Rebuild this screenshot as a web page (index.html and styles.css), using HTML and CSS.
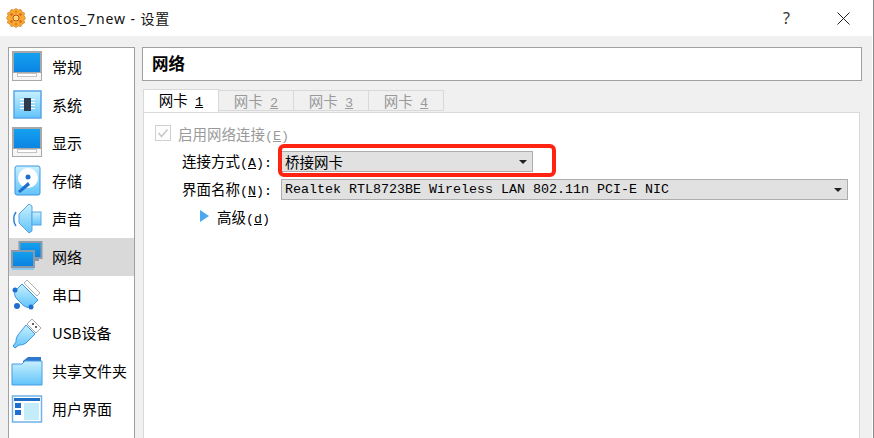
FILE: index.html
```html
<!DOCTYPE html>
<html lang="zh">
  <head>
    <meta charset="UTF-8" />
    <title>centos_7new - 设置</title>
    <link rel="stylesheet" href="styles.css">
  </head>
  <body>
    <svg class="defs" width="0" height="0">
      <defs>
        <linearGradient id="screen" x1="0" y1="0" x2="0" y2="1">
          <stop offset="0" stop-color="#14a2f0" />
          <stop offset="1" stop-color="#0a7fe0" />
        </linearGradient>
        <linearGradient id="light" x1="0" y1="0" x2="0" y2="1">
          <stop offset="0" stop-color="#c8f0ff" />
          <stop offset="1" stop-color="#62c4fa" />
        </linearGradient>
      </defs>
    </svg>
    <div class="window">
      <div class="titlebar">
        <svg class="app-icon" viewBox="0 0 20 20">
          <path d="M10 .5l2.300 1.500 2.700-.5 1 2.500 2.500 1-.5 2.700L19.500 10 18 12.300l.5 2.700-2.500 1-1 2.500-2.700-.5L10 19.500 7.700 18l-2.700.5-1-2.500-2.500-1 .5-2.700L.5 10 2 7.700 1.500 5l2.500-1 1-2.500 2.700.5z" fill="#f7a92c" stroke="#d08a3a" stroke-width=".8" />
          <circle cx="10" cy="10" r="3" fill="#fdd77a" stroke="#c0541a" stroke-width="1" />
          <circle cx="5.500" cy="6.500" r="1.300" fill="#d9622b" />
          <circle cx="14.500" cy="6.500" r="1.300" fill="#d9622b" />
          <circle cx="5.500" cy="13.500" r="1.300" fill="#d9622b" />
          <circle cx="14.500" cy="13.500" r="1.300" fill="#d9622b" />
          <circle cx="10" cy="3.800" r="1.100" fill="#e57a2e" />
          <circle cx="10" cy="16.200" r="1.100" fill="#e57a2e" />
        </svg>
        <span class="title">centos_7new - 设置</span>
        <span class="help">?</span>
        <svg class="close" viewBox="0 0 13 13">
          <path d="M.5.500l12 12M12.500.500l-12 12" stroke="#222" fill="none" />
        </svg>
      </div>

      <div class="content">
        <ul class="sidebar">
          <li>
            <svg class="icon" viewBox="0 0 32 32">
              <rect x="2" y="1" width="28" height="24" fill="url(#screen)" stroke="#a8a8a8" stroke-width="2" />
              <rect x="1.500" y="21.500" width="29" height="8" fill="#f6f6f6" stroke="#a8a8a8" />
              <rect x="6.500" y="22.500" width="19" height="3" fill="#fff" stroke="#c4c4c4" />
            </svg>
            常规
          </li>
          <li>
            <svg class="icon" viewBox="0 0 32 32">
              <rect x="3" y="2" width="27" height="27" fill="url(#light)" stroke="#5aa5e6" stroke-width="1.500" />
              <path d="M9 10.500h15M9 13.500h15M9 16.500h15M9 19.500h15" stroke="#fff" />
              <rect x="13" y="9" width="7" height="13" fill="#2e3b4e" />
            </svg>
            系统
          </li>
          <li>
            <svg class="icon" viewBox="0 0 32 32">
              <rect x="2" y="1" width="28" height="24" fill="url(#screen)" stroke="#a8a8a8" stroke-width="2" />
              <rect x="1.500" y="21.500" width="29" height="8" fill="#f6f6f6" stroke="#a8a8a8" />
              <rect x="6.500" y="22.500" width="19" height="3" fill="#fff" stroke="#c4c4c4" />
            </svg>
            显示
          </li>
          <li>
            <svg class="icon" viewBox="0 0 32 32">
              <rect x="4" y="1" width="25" height="29" rx="2" fill="url(#light)" stroke="#3e95e0" />
              <circle cx="17" cy="13" r="10" fill="#fff" />
              <circle cx="17" cy="12" r="2.500" fill="#1f6fd0" />
              <path d="M7 26l10-9 2 3-10 8z" fill="#1f6fd0" />
            </svg>
            存储
          </li>
          <li>
            <svg class="icon" viewBox="0 0 32 32">
              <path d="M8 11l10-10 3 2v25l-3 2L8 20z" fill="url(#light)" stroke="#5aa5e6" />
              <rect x="21" y="9" width="9" height="13" fill="url(#light)" stroke="#5aa5e6" />
              <path d="M5 9c-3 4-3 10 0 14" fill="none" stroke="#2a7fdc" stroke-width="1.500" />
            </svg>
            声音
          </li>
          <li class="selected">
            <svg class="icon" viewBox="0 0 32 32">
              <rect x="8.500" y="1" width="22" height="16" fill="url(#screen)" stroke="#8a9aa8" stroke-width="2" />
              <path d="M20 19h8" stroke="#8a9aa8" stroke-width="2" />
              <rect x="1" y="10" width="22" height="16" fill="url(#screen)" stroke="#8a9aa8" stroke-width="2" />
              <path d="M1 28h22" stroke="#8fc8ee" stroke-width="2" />
            </svg>
            网络
          </li>
          <li>
            <svg class="icon" viewBox="0 0 32 32">
              <path d="M16 1l13 13-3 3L13 4z" fill="#fff" stroke="#b0b0b0" />
              <path d="M11 5l16 16-7 7c-3 1-6 0-8-2L6 20c-2-2-3-5-2-8z" fill="url(#light)" stroke="#3e95e0" />
              <circle cx="4" cy="11" r="2.500" fill="#1f6fd0" />
              <circle cx="20" cy="28" r="2.500" fill="#1f6fd0" />
              <circle cx="6" cy="27" r="3" fill="#1f6fd0" />
            </svg>
            串口
          </li>
          <li>
            <svg class="icon" viewBox="0 0 32 32">
              <path d="M21 2l9 9-5 5-9-9z" fill="#fff" stroke="#a8a8a8" />
              <circle cx="22" cy="7" r="1" fill="#333" />
              <circle cx="25" cy="10" r="1" fill="#333" />
              <path d="M15 8l9 9-9 9c-3 2-5 2-7 2l-4 3-2-2 3-4c0-2 0-4 2-7z" fill="url(#light)" stroke="#3e95e0" />
            </svg>
            USB设备
          </li>
          <li>
            <svg class="icon" viewBox="0 0 32 32">
              <path d="M12 6l5-4h13v8H12z" fill="#2f78cc" />
              <path d="M1 9h10l3-3h17v24H1z" fill="url(#light)" stroke="#4a9be0" />
            </svg>
            共享文件夹
          </li>
          <li>
            <svg class="icon" viewBox="0 0 32 32">
              <rect x="1.500" y="3" width="29" height="26" fill="#fff" stroke="#6fb1e8" stroke-width="1.500" />
              <rect x="3" y="5" width="26" height="3" fill="#1f6fc4" />
              <rect x="13" y="10" width="15" height="17" fill="#c4edfc" />
              <rect x="4" y="10" width="6" height="5" fill="#1f6fd0" />
              <rect x="4" y="17" width="6" height="5" fill="#1f6fd0" />
            </svg>
            用户界面
          </li>
        </ul>

        <div class="main">
          <div class="page-title">网络</div>
          <div class="tabs">
            <div class="tab active">网卡 <span class="mn">1</span></div>
            <div class="tab">网卡 <span class="mn">2</span></div>
            <div class="tab">网卡 <span class="mn">3</span></div>
            <div class="tab">网卡 <span class="mn">4</span></div>
          </div>
          <div class="panel">
            <div class="enable">
              <span class="checkbox">
                <svg viewBox="0 0 14 14"><path d="M2.500 7l3 3.500 6-7" fill="none" stroke="#c8c8c8" stroke-width="1.500" /></svg>
              </span>
              <span>启用网络连接<span class="latin">(<u>E</u>)</span></span>
            </div>
            <div class="form">
              <label>连接方式<span class="latin">(<u>A</u>):</span></label>
              <div class="combo short"><span>桥接网卡</span><i class="arrow"></i></div>
              <label>界面名称<span class="latin">(<u>N</u>):</span></label>
              <div class="combo"><span class="latin">Realtek RTL8723BE Wireless LAN 802.11n PCI-E NIC</span><i class="arrow"></i></div>
            </div>
            <div class="advanced">
              <i class="expander"></i>
              <span>高级<span class="latin">(<u>d</u>)</span></span>
            </div>
            <div class="callout"></div>
          </div>
        </div>
      </div>
    </div>
  </body>
</html>
```

FILE: styles.css
```css
* {
  box-sizing: border-box;
}
html,
body {
  margin: 0;
  height: 100%;
  overflow: hidden;
}
body {
  font-family: "Noto Sans CJK SC", sans-serif;
  font-size: 14.500px;
  color: #000;
  background-color: #fff;
}
.defs {
  position: absolute;
}
.window {
  width: 874px;
  height: 438px;
  display: flex;
  flex-direction: column;
  background-color: #fff;
  border-right: 1px solid #8a8a8a;
}
.titlebar {
  flex: none;
  height: 36px;
  display: flex;
  align-items: center;
  padding: 0 23px 0 6px;
}
.app-icon {
  width: 20px;
  height: 20px;
}
.title {
  margin-left: 5px;
  flex: 1;
  font-family: "Noto Sans", "Noto Sans CJK SC", sans-serif;
  font-size: 14px;
  letter-spacing: 0.9px;
  color: #111;
}
.help {
  font-family: "Noto Sans", sans-serif;
  font-size: 16px;
  margin-right: 47px;
  color: #333;
}
.close {
  width: 13px;
  height: 13px;
}
.content {
  flex: 1;
  display: flex;
  gap: 7px;
  margin-right: 1px;
  padding: 11px 10px 0 8px;
  min-height: 0;
  background-color: #f0f0f0;
}
.sidebar {
  flex: none;
  width: 127px;
  margin: 0;
  padding: 0;
  list-style: none;
  font-size: 15px;
  background-color: #fff;
  border: 1px solid #a0a0a0;
  border-bottom: 0;
}
.sidebar li {
  height: 38px;
  display: flex;
  align-items: center;
  gap: 9px;
  padding: 0 0 2px 2px;
  white-space: nowrap;
}
.sidebar .selected {
  background-color: #d9d9d9;
}
.icon {
  flex: none;
  width: 32px;
  height: 32px;
  margin-top: 2px;
}
.main {
  flex: 1;
  display: flex;
  flex-direction: column;
  min-width: 0;
}
.page-title {
  height: 34px;
  flex: none;
  padding-left: 9px;
  line-height: 30px;
  font-size: 16.500px;
  font-weight: bold;
  background-color: #fff;
  border: 1px solid #a0a0a0;
}
.tabs {
  flex: none;
  height: 22px;
  margin: 9px 0 0 1px;
  display: flex;
  align-items: flex-end;
  position: relative;
  z-index: 1;
}
.tab {
  width: 75px;
  height: 21px;
  margin-bottom: 1px;
  text-align: center;
  line-height: 20px;
  color: #9a9a9a;
  border: 1px solid #d9d9d9;
  border-left: 0;
  white-space: nowrap;
}
.tab.active {
  width: 76px;
  height: 23px;
  margin-bottom: 0;
  color: #000;
  background-color: #fff;
  border-left: 1px solid #d9d9d9;
  border-bottom: 0;
}
.mn {
  font-family: "Liberation Mono", monospace;
  font-size: 13.500px;
  text-decoration: underline;
  margin-left: 4px;
}
.panel {
  flex: 1;
  position: relative;
  margin: 0 2px 0 1px;
  background-color: #fff;
  border: 1px solid #d9d9d9;
  border-bottom: 0;
}
.latin {
  font-family: "Liberation Mono", monospace;
  font-size: 13.330px;
}
.enable {
  display: flex;
  align-items: center;
  gap: 7px;
  margin: 11px 0 0 11px;
  height: 18px;
  color: #9a9a9a;
}
.checkbox {
  width: 16px;
  height: 16px;
  background-color: #fdfdfd;
  border: 1px solid #cfcfcf;
  display: flex;
}
.form {
  display: grid;
  grid-template-columns: 99px 1fr;
  grid-auto-rows: 21px;
  row-gap: 7px;
  margin: 9px 11px 0 38px;
  align-items: center;
}
.form label {
  white-space: nowrap;
  line-height: 21px;
}
.combo {
  height: 21px;
  display: flex;
  align-items: center;
  justify-content: space-between;
  padding: 0 5px 0 3px;
  background-color: #e1e1e1;
  border: 1px solid #adadad;
  white-space: nowrap;
  overflow: hidden;
  line-height: 19px;
}
.combo.short {
  width: 252px;
}
.arrow {
  width: 0;
  height: 0;
  border-left: 4px solid transparent;
  border-right: 4px solid transparent;
  border-top: 4px solid #222;
}
.advanced {
  display: flex;
  align-items: center;
  gap: 8px;
  margin: 6px 0 0 56px;
  height: 20px;
}
.expander {
  width: 0;
  height: 0;
  border-top: 6px solid transparent;
  border-bottom: 6px solid transparent;
  border-left: 9px solid #4aa8ee;
}
.callout {
  position: absolute;
  left: 134px;
  top: 31px;
  width: 278px;
  height: 33px;
  border: 4px solid #ff2412;
  border-radius: 6px;
}
```
